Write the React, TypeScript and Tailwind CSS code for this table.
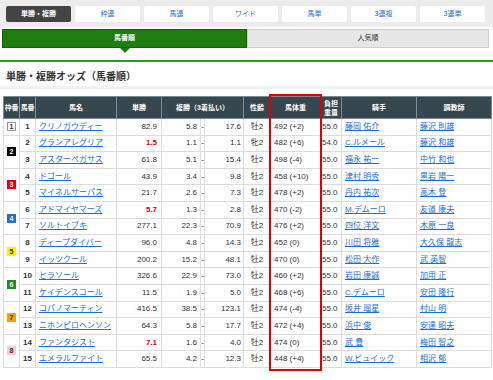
import React from "react";

type Row = {
  f: number;
  n: number;
  name: string;
  win: string;
  hot?: boolean;
  pmin: string;
  pmax: string;
  sa: string;
  wt: string;
  kg: string;
  j: string;
  t: string;
};

const rows: Row[] = [
  { f: 1, n: 1, name: "クリノガウディー", win: "82.9", pmin: "5.8", pmax: "17.6", sa: "牡2", wt: "492 (+2)", kg: "55.0", j: "藤岡 佑介", t: "藤沢 則雄" },
  { f: 2, n: 2, name: "グランアレグリア", win: "1.5", hot: true, pmin: "1.1", pmax: "1.1", sa: "牝2", wt: "482 (+6)", kg: "54.0", j: "C.ルメール", t: "藤沢 和雄" },
  { f: 2, n: 3, name: "アスターペガサス", win: "61.8", pmin: "5.1", pmax: "15.4", sa: "牡2", wt: "498 (-4)", kg: "55.0", j: "福永 祐一", t: "中竹 和也" },
  { f: 3, n: 4, name: "ドゴール", win: "43.9", pmin: "3.4", pmax: "9.8", sa: "牡2", wt: "458 (+10)", kg: "55.0", j: "津村 明秀", t: "黒岩 陽一" },
  { f: 3, n: 5, name: "マイネルサーパス", win: "21.7", pmin: "2.6", pmax: "7.3", sa: "牡2", wt: "478 (+2)", kg: "55.0", j: "丹内 祐次", t: "高木 登" },
  { f: 4, n: 6, name: "アドマイヤマーズ", win: "5.7", hot: true, pmin: "1.3", pmax: "2.8", sa: "牡2", wt: "470 (-2)", kg: "55.0", j: "M.デムーロ", t: "友道 康夫" },
  { f: 4, n: 7, name: "ソルトイブキ", win: "277.1", pmin: "22.3", pmax: "70.9", sa: "牡2", wt: "476 (+2)", kg: "55.0", j: "四位 洋文", t: "木原 一良" },
  { f: 5, n: 8, name: "ディープダイバー", win: "96.0", pmin: "4.8", pmax: "14.3", sa: "牡2", wt: "452 (0)", kg: "55.0", j: "川田 将雅", t: "大久保 龍志" },
  { f: 5, n: 9, name: "イッツクール", win: "200.2", pmin: "15.2", pmax: "48.1", sa: "牡2", wt: "470 (0)", kg: "55.0", j: "松田 大作", t: "武 英智" },
  { f: 6, n: 10, name: "ヒラソール", win: "326.6", pmin: "22.9", pmax: "73.0", sa: "牡2", wt: "460 (+2)", kg: "55.0", j: "岩田 康誠", t: "加用 正" },
  { f: 6, n: 11, name: "ケイデンスコール", win: "11.5", pmin: "1.9", pmax: "5.0", sa: "牡2", wt: "468 (+6)", kg: "55.0", j: "C.デムーロ", t: "安田 隆行" },
  { f: 7, n: 12, name: "コパノマーティン", win: "416.5", pmin: "38.5", pmax: "123.1", sa: "牡2", wt: "474 (-4)", kg: "55.0", j: "坂井 瑠星", t: "村山 明" },
  { f: 7, n: 13, name: "ニホンピロヘンソン", win: "64.3", pmin: "5.8", pmax: "17.7", sa: "牡2", wt: "472 (+4)", kg: "55.0", j: "浜中 俊", t: "安達 昭夫" },
  { f: 8, n: 14, name: "ファンタジスト", win: "7.1", hot: true, pmin: "1.6", pmax: "4.0", sa: "牡2", wt: "474 (0)", kg: "55.0", j: "武 豊", t: "梅田 智之" },
  { f: 8, n: 15, name: "エメラルファイト", win: "65.5", pmin: "4.2", pmax: "12.3", sa: "牡2", wt: "448 (+4)", kg: "55.0", j: "W.ビュイック", t: "相沢 郁" },
];

const frameStyle: Record<number, string> = {
  1: "bg-white text-[#333] border border-[#999]",
  2: "bg-black text-white",
  3: "bg-[#e60012] text-white",
  4: "bg-[#1d6fd0] text-white",
  5: "bg-[#fff000] text-[#333]",
  6: "bg-[#1f8b1f] text-white",
  7: "bg-[#f8a400] text-[#333]",
  8: "bg-[#f8c8d8] text-[#333]",
};

const tabs = ["単勝・複勝", "枠連", "馬連", "ワイド", "馬単", "3連複", "3連単"];

const font = { fontFamily: '"Liberation Sans", "Noto Sans CJK JP", sans-serif' };

export default function App() {
  const frameCount: Record<number, number> = {};
  rows.forEach((r) => (frameCount[r.f] = (frameCount[r.f] || 0) + 1));
  const seen: Record<number, boolean> = {};

  const th = "border border-[#7d8a90] bg-[#37474f] text-white font-bold text-[7px] text-center px-0 leading-[9px] whitespace-nowrap";
  const td = "border border-[#dcdcdc] text-[8px] text-[#333] p-0";
  const link = "text-[#1a6fd6] underline";

  return (
    <div className="w-[493px] h-[380px] bg-white overflow-hidden" style={font}>
      {/* top bet-type tabs */}
      <div className="h-[27px] bg-[#ececec] flex items-start gap-[4px] pl-[6px] pt-[6px]">
        {tabs.map((t, i) => (
          <div
            key={t}
            className={
              i === 0
                ? "w-[65px] h-[16px] rounded-[2px] bg-[#444] text-white font-bold text-[7px] flex items-center justify-center"
                : "w-[65px] h-[16px] rounded-[2px] bg-white text-[#1a6fd6] text-[7px] flex items-center justify-center"
            }
          >
            {t}
          </div>
        ))}
      </div>

      {/* sort tabs */}
      <div className="mt-[2px] flex pl-[2px] h-[19px]">
        <div className="relative w-[245px] h-[19px] bg-[#1f7d10] border border-[#16610b] text-white font-bold text-[7px] flex items-center justify-center">
          馬番順
          <div className="absolute left-1/2 -translate-x-1/2 top-[18px] w-0 h-0 border-l-[5px] border-r-[5px] border-t-[5px] border-l-transparent border-r-transparent border-t-[#1f7d10]" />
        </div>
        <div className="w-[242px] h-[19px] bg-[#e6e6e6] border border-[#cfcfcf] text-[#333] text-[7px] flex items-center justify-center">
          人気順
        </div>
      </div>

      <div className="mt-[12px] h-[2px] bg-[#2a9a1e]" />

      <div className="pl-[6px] pt-[9px] h-[24px] text-[10px] font-bold text-[#333] leading-[12px]">
        単勝・複勝オッズ（馬番順）
      </div>
      <div className="h-[3px] bg-[#f2f2f2]" />

      <div className="relative mt-[7px] pl-[3px]">
        <table className="border-collapse table-fixed w-[488px]">
          <colgroup>
            <col className="w-[16px]" />
            <col className="w-[16px]" />
            <col className="w-[81px]" />
            <col className="w-[45px]" />
            <col className="w-[39px]" />
            <col className="w-[4px]" />
            <col className="w-[39px]" />
            <col className="w-[27px]" />
            <col className="w-[50px]" />
            <col className="w-[21px]" />
            <col className="w-[75px]" />
            <col className="w-[75px]" />
          </colgroup>
          <thead>
            <tr className="h-[22px]">
              <th className={th + " text-[6px] tracking-[-0.3px]"}>枠番</th>
              <th className={th + " text-[6px] tracking-[-0.3px]"}>馬番</th>
              <th className={th}>馬名</th>
              <th className={th}>単勝</th>
              <th className={th} colSpan={3}>複勝（3着払い）</th>
              <th className={th}>性齢</th>
              <th className={th}>馬体重</th>
              <th className={th + " text-[6.5px] leading-[8px]"}>
                負担
                <br />
                重量
              </th>
              <th className={th}>騎手</th>
              <th className={th}>調教師</th>
            </tr>
          </thead>
          <tbody>
            {rows.map((r) => {
              const first = !seen[r.f];
              seen[r.f] = true;
              return (
                <tr key={r.n} className="h-[16.6px]">
                  {first && (
                    <td className={td + " align-middle"} rowSpan={frameCount[r.f]}>
                      <div className="flex justify-center">
                        <div
                          className={
                            "w-[9px] h-[9px] flex items-center justify-center text-[7px] font-bold leading-none " +
                            frameStyle[r.f]
                          }
                        >
                          {r.f}
                        </div>
                      </div>
                    </td>
                  )}
                  <td className={td + " text-center font-bold"}>{r.n}</td>
                  <td className={td + " pl-[3px] whitespace-nowrap overflow-hidden text-[7.5px]"}>
                    <span className={link}>{r.name}</span>
                  </td>
                  <td className={td + " text-right pr-[4px]"}>
                    {r.hot ? <span className="text-[#e60012] font-bold">{r.win}</span> : r.win}
                  </td>
                  <td className={td + " text-right pr-[3px]"}>{r.pmin}</td>
                  <td className={td + " text-center text-[7px]"}>-</td>
                  <td className={td + " text-right pr-[2px]"}>{r.pmax}</td>
                  <td className={td + " text-center text-[7.5px]"}>{r.sa}</td>
                  <td className={td + " pl-[3px] whitespace-nowrap"}>{r.wt}</td>
                  <td className={td + " pl-[1px]"}>{r.kg}</td>
                  <td className={td + " pl-[3px] whitespace-nowrap text-[7px]"}>
                    <span className={link}>{r.j}</span>
                  </td>
                  <td className={td + " pl-[3px] whitespace-nowrap text-[7px]"}>
                    <span className={link}>{r.t}</span>
                  </td>
                </tr>
              );
            })}
          </tbody>
        </table>
        <div className="absolute left-[269px] top-[-2px] w-[53px] h-[277px] border-2 border-[#e00000] pointer-events-none" />
      </div>
    </div>
  );
}
